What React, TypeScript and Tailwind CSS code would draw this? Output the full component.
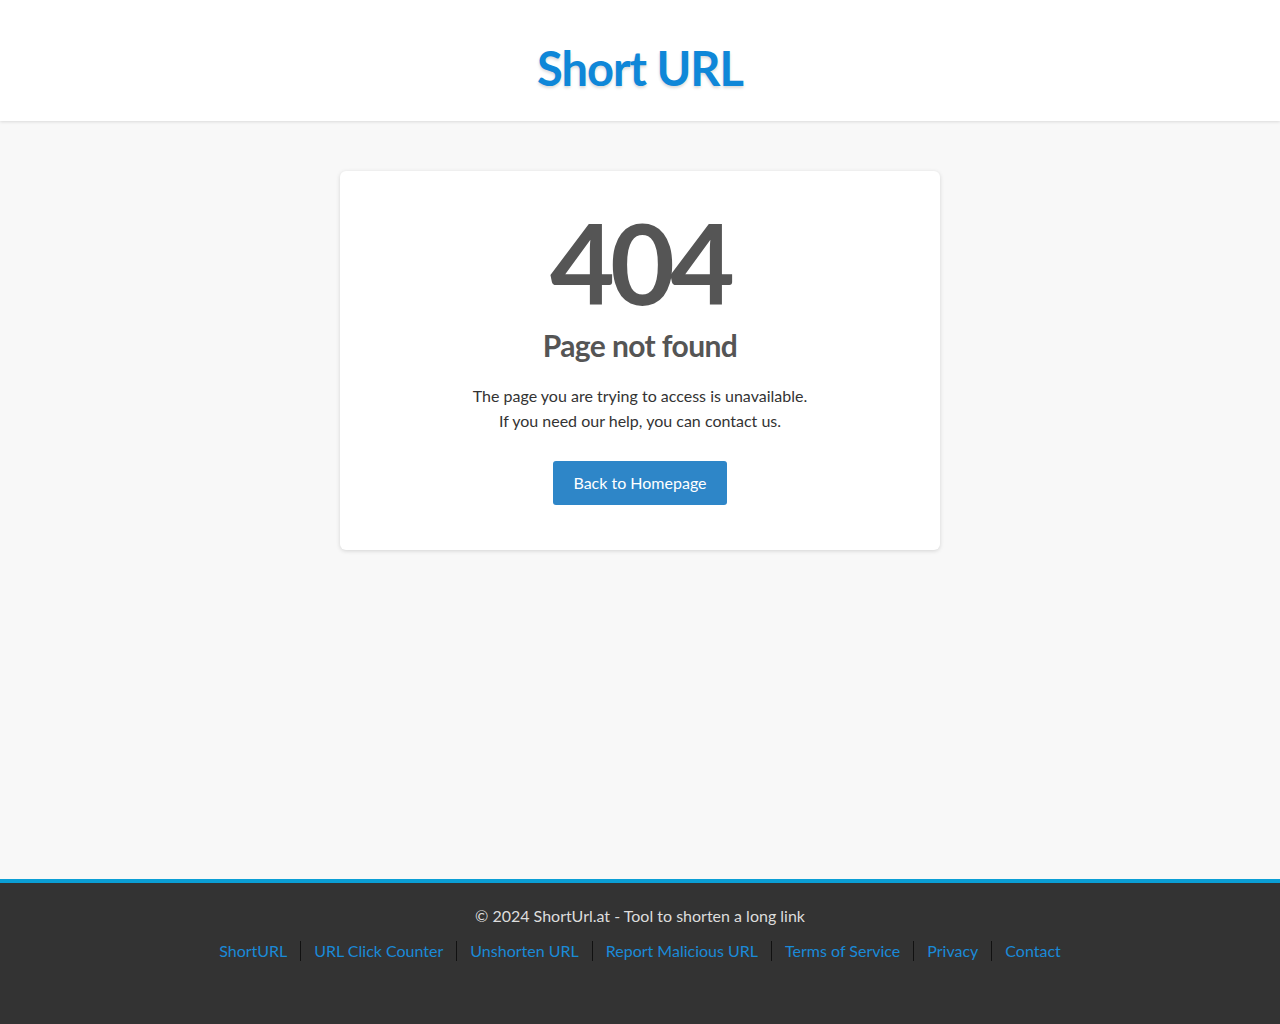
import React from 'react';

const links = ['ShortURL', 'URL Click Counter', 'Unshorten URL', 'Report Malicious URL', 'Terms of Service', 'Privacy', 'Contact'];

const App = () => {
	return (
		<div className="min-h-screen flex flex-col bg-[#f8f8f8] font-['Lato','Noto_Sans',sans-serif] text-[#333]">
			{/* Header */}
			<header className="h-[121px] bg-white shadow-[0_1px_3px_rgba(0,0,0,0.12)] flex items-center justify-center pt-[16px]">
				<h1 className="text-[47px] font-bold text-[#0f87d8] tracking-[-1px] [text-shadow:0_2px_3px_rgba(0,0,0,0.15)]">Short URL</h1>
			</header>

			{/* Card */}
			<main className="flex-1 flex justify-center pt-[50px]">
				<div className="w-[600px] h-[379px] bg-white rounded-md shadow-[0_1px_4px_rgba(0,0,0,0.15)] flex flex-col items-center pt-[35px]">
					<div className="text-[112px] leading-none font-bold text-[#555] tracking-[-5px]">404</div>
					<h2 className="mt-[5px] text-[30px] leading-[45px] font-bold text-[#555] tracking-[-0.6px]">Page not found</h2>
					<p className="mt-[15px] text-[16px] leading-[25px] text-center text-[#333]">
						The page you are trying to access is unavailable.
						<br />
						If you need our help, you can contact us.
					</p>
					<a className="mt-[28px] h-[44px] px-[20px] flex items-center rounded-[3px] bg-[#2e86c8] text-white text-[16px]">
						Back to Homepage
					</a>
				</div>
			</main>

			{/* Footer */}
			<footer className="h-[145px] bg-[#333] border-t-[4px] border-[#0b9fd5] flex flex-col items-center pt-[21px]">
				<p className="text-[16px] leading-[24px] text-[#ddd]">© 2024 ShortUrl.at - Tool to shorten a long link</p>
				<nav className="mt-[13px] flex items-center">
					{links.map((l, i) => (
						<a
							key={l}
							className={`px-[13px] text-[16px] leading-[20px] text-[#1a8ad8] ${i > 0 ? 'border-l border-[#111]' : ''}`}
						>
							{l}
						</a>
					))}
				</nav>
			</footer>
		</div>
	);
};

export default App;
